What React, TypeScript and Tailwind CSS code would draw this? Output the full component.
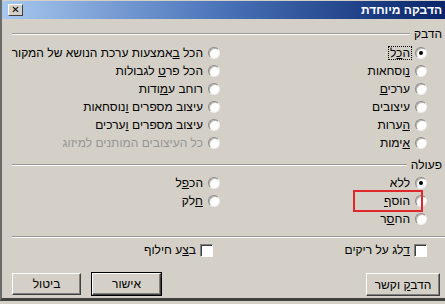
import type { ReactNode } from "react";

type OptionProps = {
	label: ReactNode;
	checked?: boolean;
	disabled?: boolean;
	focused?: boolean;
};

const Radio = ({ checked }: { checked?: boolean }) => (
	<span className="relative block w-[12px] h-[12px] shrink-0 rounded-full bg-white border border-t-[#8a8a8a] border-l-[#8a8a8a] border-b-[#eeeeee] border-r-[#eeeeee] shadow-[inset_1px_1px_0_#b8b4ac]">
		{checked && <span className="absolute top-[3px] left-[3px] w-[4px] h-[4px] rounded-full bg-black" />}
	</span>
);

const Checkbox = () => (
	<span className="block w-[13px] h-[13px] shrink-0 bg-white border border-t-[#808080] border-l-[#808080] border-b-white border-r-white shadow-[inset_1px_1px_0_#404040]" />
);

const Option = ({ label, checked, disabled, focused }: OptionProps) => (
	<div className="flex items-center h-[18px] gap-[3px] whitespace-nowrap">
		<Radio checked={checked} />
		<span
			className={
				(disabled ? "text-[#959595] " : "text-black ") +
				(focused ? "border border-dotted border-black px-[1px] leading-[12px]" : "px-[2px]")
			}
		>
			{label}
		</span>
	</div>
);

const GroupHeader = ({ title }: { title: string }) => (
	<div className="flex items-center h-[14px] gap-[4px] pr-[3px] pl-[10px]">
		<span>{title}</span>
		<div className="flex-1 border-t border-t-[#9a9890] border-b border-b-white" />
	</div>
);

const Button = ({ children, isDefault }: { children: ReactNode; isDefault?: boolean }) => (
	<div className={isDefault ? "border border-black" : ""}>
		<button
			type="button"
			className="flex items-center justify-center h-[22px] w-[69px] bg-[#d4d0c8] border border-t-white border-l-white border-b-[#404040] border-r-[#404040] shadow-[inset_-1px_-1px_0_#808080]"
		>
			{children}
		</button>
	</div>
);

export default function App() {
	return (
		<div
			dir="rtl"
			className="relative w-[445px] h-[304px] overflow-hidden bg-[#d4d0c8] text-[12px] text-black font-['Liberation_Sans',_'DejaVu_Sans',_sans-serif]"
		>
			<div className="h-[301px] border-l-2 border-l-[#6a6a6a] border-b-[3px] border-b-[#404040] pt-[1px]">
				{/* שורת כותרת */}
				<div className="flex items-center justify-between h-[18px] pr-[3px] pl-[6px] bg-linear-to-l from-[#0a246a] via-[#4a72b8] to-[#a8c8ee]">
					<span className="font-bold text-white">הדבקה מיוחדת</span>
					<span className="flex items-center justify-center w-[15px] h-[12px] bg-[#d4d0c8] border border-t-white border-l-white border-b-[#404040] border-r-[#404040] text-[10px] font-bold leading-none">
						✕
					</span>
				</div>

				{/* הדבק */}
				<div className="mt-[8px]">
					<GroupHeader title="הדבק" />
				</div>
				<div className="grid grid-cols-[207px_1fr] mt-[3px] pr-[18px] pl-[10px]">
					<Option label={<>ה<u>כ</u>ל</>} checked focused />
					<Option label={<>הכל <u>ב</u>אמצעות ערכת הנושא של המקור</>} />
					<Option label={<><u>נ</u>וסחאות</>} />
					<Option label={<>הכל פר<u>ט</u> לגבולות</>} />
					<Option label={<>ערכי<u>ם</u></>} />
					<Option label={<>רוחב ע<u>מ</u>ודות</>} />
					<Option label="עיצובים" />
					<Option label={<>עיצוב מספרים <u>ו</u>נוסחאות</>} />
					<Option label={<><u>ה</u>ערות</>} />
					<Option label={<>עיצוב מספרים <u>ו</u>ערכים</>} />
					<Option label={<><u>א</u>ימות</>} />
					<Option label="כל העיצובים המותנים למיזוג" disabled />
				</div>

				{/* פעולה */}
				<div className="mt-[6px]">
					<GroupHeader title="פעולה" />
				</div>
				<div className="relative grid grid-cols-[207px_1fr] mt-[2px] pr-[18px] pl-[10px]">
					<Option label="ללא" checked />
					<Option label={<>הכ<u>פ</u>ל</>} />
					<Option label={<>הוס<u>ף</u></>} />
					<Option label={<><u>ח</u>לק</>} />
					<Option label={<>הח<u>ס</u>ר</>} />
					<div />
					{/* מסגרת סימון אדומה */}
					<div className="absolute top-[16px] right-[22px] w-[70px] h-[22px] border-2 border-[#e0282c]" />
				</div>

				<div className="mt-[8px] ml-[10px] border-t border-t-[#9a9890] border-b border-b-white" />

				<div className="grid grid-cols-[214px_1fr] mt-[5px] pr-[18px] pl-[10px] whitespace-nowrap">
					<div className="flex items-center h-[14px] gap-[4px]">
						<Checkbox />
						<span>
							<u>ד</u>לג על ריקים
						</span>
					</div>
					<div className="flex items-center h-[14px] gap-[4px]">
						<Checkbox />
						<span>
							ב<u>צ</u>ע חילוף
						</span>
					</div>
				</div>

				<div className="flex justify-between mt-[15px] pr-[5px] pl-[10px]">
					<div className="pt-[1px]">
						<button
							type="button"
							className="flex items-center justify-center h-[23px] w-[74px] bg-[#d4d0c8] border border-t-white border-l-white border-b-[#404040] border-r-[#404040] shadow-[inset_-1px_-1px_0_#808080]"
						>
							<span>
								הדב<u>ק</u> וקשר
							</span>
						</button>
					</div>
					<div className="flex gap-[10px] items-start">
						<Button isDefault>אישור</Button>
						<div className="pt-[1px]">
							<Button>ביטול</Button>
						</div>
					</div>
				</div>
			</div>
		</div>
	);
}
